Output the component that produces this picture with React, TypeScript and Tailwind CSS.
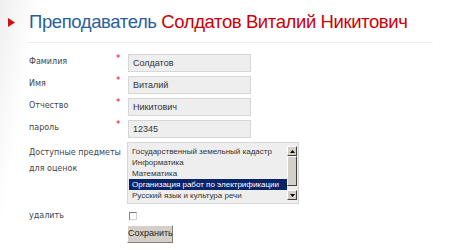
const fields = [
  { label: 'Фамилия', value: 'Солдатов' },
  { label: 'Имя', value: 'Виталий' },
  { label: 'Отчество', value: 'Никитович' },
  { label: 'пароль', value: '12345' },
];

const subjects = [
  'Государственный земельный кадастр',
  'Информатика',
  'Математика',
  'Организация работ по электрификации',
  'Русский язык и культура речи',
];

function ScrollArrow({ up }: { up?: boolean }) {
  return (
    <div className="flex h-[10px] w-[10px] items-center justify-center border-t border-l border-t-white border-l-white border-r border-b border-r-[#404040] border-b-[#404040] bg-[#d4d0c8]">
      <svg width="5" height="3" viewBox="0 0 5 3">
        <path d={up ? 'M2.5 0 L5 3 L0 3 Z' : 'M0 0 L5 0 L2.5 3 Z'} fill="#000" />
      </svg>
    </div>
  );
}

export default function App() {
  return (
    <div className="h-[250px] w-[460px] overflow-hidden bg-[linear-gradient(100deg,#efefef_0px,#ffffff_40px)] font-['DejaVu_Sans',sans-serif]">
      <div className="flex items-center gap-[14px] pl-[8px] pt-[9px]">
        <svg width="7" height="9" viewBox="0 0 7 9">
          <path d="M0 0 L7 4.5 L0 9 Z" fill="#d40b14" />
        </svg>
        <h1 className="whitespace-nowrap font-['Liberation_Sans',sans-serif] text-[18.5px] leading-[26px] tracking-[-0.4px]">
          <span className="text-[#2b5f9c]">Преподаватель</span>{' '}
          <span className="text-[#cc0008]">Солдатов Виталий Никитович</span>
        </h1>
      </div>
      <div className="ml-[27px] mt-[7px] h-px w-[406px] bg-[#eeeeee]" />

      <div className="ml-[29px] mt-[11px] flex flex-col text-[8px] text-[#444]">
        {fields.map((f) => (
          <div key={f.label} className="flex h-[22px] items-start">
            <div className="w-[87px] pt-[3px] leading-[10px]">{f.label}</div>
            <div className="w-[12px] text-[9px] leading-[8px] text-[#e00]">*</div>
            <div className="flex h-[18px] w-[123px] items-center border border-[#d6d6d6] bg-[#eeeeee] pl-[4px] pt-[1px] font-['Liberation_Sans',sans-serif] text-[9px] text-[#333]">
              {f.value}
            </div>
          </div>
        ))}

        <div className="flex items-start">
          <div className="w-[98px] pt-[3px] leading-[16px]">
            Доступные предметы
            <br />
            для оценок
          </div>
          <div className="flex h-[62px] w-[172px] border border-[#d6d6d6] bg-[#eeeeee]">
            <div className="flex flex-1 flex-col whitespace-nowrap pl-[1px] pt-[3px] font-['Liberation_Sans',sans-serif] text-[8px] leading-[11px] text-[#333]">
              {subjects.map((s, i) => (
                <div
                  key={s}
                  className={
                    i === 3 ? 'bg-[#0a246a] pl-[3px] text-white' : 'pl-[3px]'
                  }
                >
                  {s}
                </div>
              ))}
            </div>
            <div className="my-[3px] mr-[1px] flex w-[10px] flex-col bg-[#f0efeb]">
              <ScrollArrow up />
              <div className="h-[30px] border-t border-l border-t-white border-l-white border-r border-b border-r-[#404040] border-b-[#404040] bg-[#d4d0c8]" />
              <div className="flex-1" />
              <ScrollArrow />
            </div>
          </div>
        </div>

        <div className="mt-[6px] flex items-center">
          <div className="w-[100px]">удалить</div>
          <div className="h-[8px] w-[8px] border border-t-[#808080] border-l-[#808080] border-r-[#d4d0c8] border-b-[#d4d0c8] bg-white" />
        </div>

        <div className="ml-[98px] mt-[3px]">
          <button className="h-[18px] w-[46px] border border-t-white border-l-white border-r-[#808080] border-b-[#808080] bg-[#d4d0c8] font-['Liberation_Sans',sans-serif] text-[9px] text-[#222]">
            Сохранить
          </button>
        </div>
      </div>
    </div>
  );
}
